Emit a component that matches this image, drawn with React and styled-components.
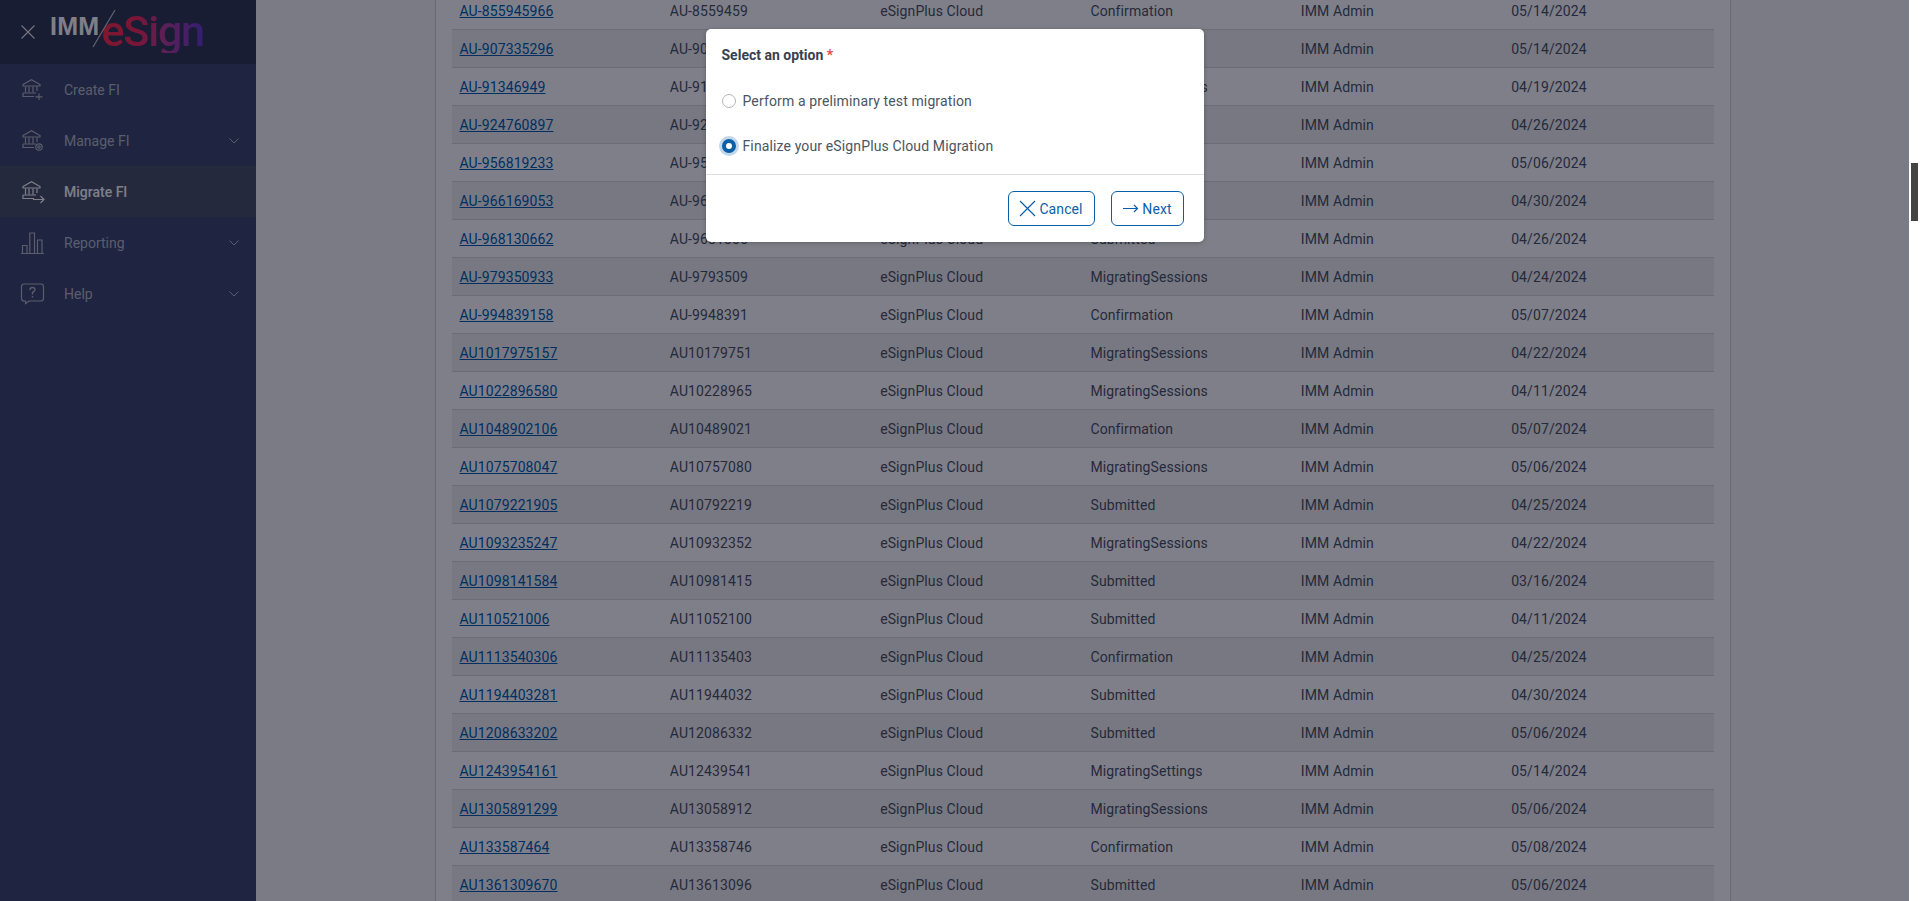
import React from "react";
import styled, { createGlobalStyle } from "styled-components";

const Global = createGlobalStyle`
  html, body { margin: 0; padding: 0; height: 100%; overflow: hidden; background: #fff; }
  body { font-family: Roboto, "Liberation Sans", sans-serif; font-size: 14px; }
  * { box-sizing: border-box; }
`;

const Shell = styled.div`display: flex; height: 901px; width: 1920px; overflow: hidden;`;
const Frame = styled.div`position: relative; display: flex; width: 1909px; height: 901px; overflow: hidden;`;
const ScrollTrack = styled.div`width: 11px; padding: 163px 2px 0 2px; background: #fff;`;
const ScrollThumb = styled.div`width: 7px; height: 58px; background: #444;`;

const Sidebar = styled.aside`width: 256px; flex: none; background: #3e4a6c; color: #b4bac6;`;
const SideHead = styled.div`display: flex; align-items: center; height: 64px; padding-left: 21px; background: #303a52;`;
const Logo = styled.div`position: relative; display: flex; align-items: center; margin-left: 15px; height: 64px; width: 170px;`;
const LogoIMM = styled.span`
  font-family: "Liberation Sans", sans-serif; font-weight: 700; font-size: 25px; letter-spacing: 0.3px;
  color: #fff; margin-top: -11px; line-height: 1;
`;
const LogoSign = styled.span`
  font-family: Roboto, sans-serif; font-weight: 500; font-size: 43px; letter-spacing: -1.2px; line-height: 1;
  margin-left: 2px; margin-top: -2px;
  background: linear-gradient(90deg, #ff3048 0%, #f22c5c 35%, #b8409c 62%, #6a3cd0 100%);
  -webkit-background-clip: text; background-clip: text; color: transparent;
`;
const LogoSlash = styled.svg`position: absolute; left: 42px; top: 9px;`;
const NavItem = styled.div`
  display: flex; align-items: center; height: 51px; padding-left: 20px; padding-right: 17px;
  background: ${p => (p.$active ? "#485266" : "transparent")};
  color: ${p => (p.$active ? "#fff" : "inherit")};
  font-weight: ${p => (p.$active ? 500 : 400)};
`;
const NavLabel = styled.span`flex: 1; margin-left: 18px;`;
const NavIcon = styled.svg`flex: none; width: 26px; height: 26px; fill: none; stroke: currentColor; stroke-width: 1.2;`;

const Main = styled.main`flex: 1; background: #f6f6f6; padding-left: 179px; padding-right: 178px; min-width: 0;`;
const Card = styled.section`
  height: 901px; overflow: hidden; background: #fff; padding: 0 16px;
  border-left: 1px solid #d4d4d8; border-right: 1px solid #d4d4d8;
`;
const Table = styled.table`
  width: 100%; margin-top: -9px; border-collapse: collapse; table-layout: fixed; color: #4b5563; font-size: 14px; letter-spacing: 0.1px;
`;
const Row = styled.tr`background: ${p => (p.$striped ? "#f0f0f0" : "transparent")}; height: 38px; border-bottom: 1px solid #d8d8dc;`;
const Cell = styled.td`padding: 2px 7px 0 7.5px; white-space: nowrap; height: 38px; line-height: 20px;`;
const RowLink = styled.a`color: #0060b0; text-decoration: underline;`;

const Overlay = styled.div`
  position: absolute; inset: 0; background: rgba(0, 0, 20, 0.5);
  display: flex; justify-content: center; align-items: flex-start; padding-top: 29px;
`;
const Modal = styled.div`
  width: 498px; height: 213px; background: #fff; border-radius: 5px; display: flex; flex-direction: column;
  box-shadow: 0 1px 4px rgba(0,0,0,.25);
`;
const ModalBody = styled.div`height: 146px; padding: 17px 16px 0; border-bottom: 1px solid #dedede;`;
const Legend = styled.div`font-weight: 700; font-size: 14px; color: #374151; line-height: 18px; margin-bottom: 14px;`;
const Required = styled.span`color: #ef4444;`;
const OptionRow = styled.label`display: flex; align-items: center; height: 45px; color: #4b5563; font-size: 14px; letter-spacing: 0.13px;`;
const Radio = styled.input`
  appearance: none; margin: 0 7px 0 0; flex: none; width: 14px; height: 14px; border-radius: 50%;
  border: 1px solid #b5b5b5; background: #fff;
  &:checked { border: 4px solid #0b5fa8; box-shadow: 0 0 0 3px rgba(11, 95, 168, 0.25); }
`;
const ModalFoot = styled.div`display: flex; justify-content: flex-end; gap: 16px; padding: 16px 20px 0 0;`;
const Button = styled.button`
  display: inline-flex; align-items: center; justify-content: center; gap: 3px; height: 35px;
  width: ${p => p.$w}px; padding: 0; border: 1px solid #0b5fa8; border-radius: 6px; background: #fff;
  color: #0b5fa8; font: 400 14px Roboto, sans-serif; letter-spacing: 0.1px;
`;
const ButtonIcon = styled.svg`width: 17px; height: 17px; fill: none; stroke: currentColor; stroke-width: 1.2; flex: none;`;

const Bank = () => (
  <>
    <path d="M3 7.5 L11.5 2.8 L20 7.5 V9 H3 Z" />
    <path d="M5.5 9.5 V15.5 M9 9.5 V15.5 M13 9.5 V15.5 M17 9.5 V14" />
    <path d="M3 16 H16 M3 16 V19.5 H14" />
  </>
);
const Chevron = styled.svg`flex: none; width: 10px; height: 6px; fill: none; stroke: currentColor; stroke-width: 1;`;
const Down = () => <Chevron viewBox="0 0 10 6"><path d="M0.5 0.5 L5 5 L9.5 0.5" /></Chevron>;

const rows = [
  ["AU-855945966","AU-8559459","Confirmation","05/14/2024"],
  ["AU-907335296","AU-9073352","Submitted","05/14/2024"],
  ["AU-91346949","AU-9134694","MigratingSessions","04/19/2024"],
  ["AU-924760897","AU-9247608","Submitted","04/26/2024"],
  ["AU-956819233","AU-9568192","Confirmation","05/06/2024"],
  ["AU-966169053","AU-9661690","Submitted","04/30/2024"],
  ["AU-968130662","AU-9681306","Submitted","04/26/2024"],
  ["AU-979350933","AU-9793509","MigratingSessions","04/24/2024"],
  ["AU-994839158","AU-9948391","Confirmation","05/07/2024"],
  ["AU1017975157","AU10179751","MigratingSessions","04/22/2024"],
  ["AU1022896580","AU10228965","MigratingSessions","04/11/2024"],
  ["AU1048902106","AU10489021","Confirmation","05/07/2024"],
  ["AU1075708047","AU10757080","MigratingSessions","05/06/2024"],
  ["AU1079221905","AU10792219","Submitted","04/25/2024"],
  ["AU1093235247","AU10932352","MigratingSessions","04/22/2024"],
  ["AU1098141584","AU10981415","Submitted","03/16/2024"],
  ["AU110521006","AU11052100","Submitted","04/11/2024"],
  ["AU1113540306","AU11135403","Confirmation","04/25/2024"],
  ["AU1194403281","AU11944032","Submitted","04/30/2024"],
  ["AU1208633202","AU12086332","Submitted","05/06/2024"],
  ["AU1243954161","AU12439541","MigratingSettings","05/14/2024"],
  ["AU1305891299","AU13058912","MigratingSessions","05/06/2024"],
  ["AU133587464","AU13358746","Confirmation","05/08/2024"],
  ["AU1361309670","AU13613096","Submitted","05/06/2024"],
];

export default function App() {
  return (
    <Shell>
      <Global />
      <Frame>
        <Sidebar>
          <SideHead>
            <svg width="14" height="14" viewBox="0 0 14 14" fill="none" stroke="#e8e8e8" strokeWidth="1.2">
              <path d="M0.5 0.5 L13.5 13.5 M13.5 0.5 L0.5 13.5" />
            </svg>
            <Logo>
              <LogoIMM>IMM</LogoIMM>
              <LogoSign>eSign</LogoSign>
              <LogoSlash width="24" height="40" viewBox="0 0 24 40" fill="none" stroke="#c8c8c8" strokeWidth="1.2">
                <path d="M23 1 L1 38" />
              </LogoSlash>
            </Logo>
          </SideHead>
          <NavItem>
            <NavIcon viewBox="0 0 26 26"><Bank /><path d="M19 16.5 V23 M15.5 19.8 H22.5" /></NavIcon>
            <NavLabel>Create FI</NavLabel>
          </NavItem>
          <NavItem>
            <NavIcon viewBox="0 0 26 26"><Bank /><circle cx="19" cy="19" r="3.2" /><circle cx="19" cy="19" r="1.2" /></NavIcon>
            <NavLabel>Manage FI</NavLabel>
            <Down />
          </NavItem>
          <NavItem $active>
            <NavIcon viewBox="0 0 26 26"><Bank /><path d="M13 20.5 H24 M20.5 17 L24 20.5 L20.5 24" /></NavIcon>
            <NavLabel>Migrate FI</NavLabel>
          </NavItem>
          <NavItem>
            <NavIcon viewBox="0 0 26 26"><path d="M1 23.5 H24 M2.5 23 V15.5 H7 V23 M9.8 23 V3 H14.5 V23 M17.5 23 V10 H22 V23" /></NavIcon>
            <NavLabel>Reporting</NavLabel>
            <Down />
          </NavItem>
          <NavItem>
            <NavIcon viewBox="0 0 26 26">
              <path d="M4 3 H21 Q23.5 3 23.5 5.5 V17 Q23.5 20 21 20 H9 L5.5 22.5 V20 H4 Q1.5 20 1.5 17 V5.5 Q1.5 3 4 3 Z" />
              <path d="M10 9 Q10 6.5 12.5 6.5 Q15 6.5 15 8.8 Q15 10.3 12.5 11.5 V13.5 M12.5 15 V16.5" strokeWidth="1.4" />
            </NavIcon>
            <NavLabel>Help</NavLabel>
            <Down />
          </NavItem>
        </Sidebar>
        <Main>
          <Card>
            <Table>
              <tbody>
                {rows.map((r, i) => (
                  <Row key={r[0]} $striped={i % 2 === 1}>
                    <Cell><RowLink href="#">{r[0]}</RowLink></Cell>
                    <Cell>{r[1]}</Cell>
                    <Cell>eSignPlus Cloud</Cell>
                    <Cell>{r[2]}</Cell>
                    <Cell>IMM Admin</Cell>
                    <Cell>{r[3]}</Cell>
                  </Row>
                ))}
              </tbody>
            </Table>
          </Card>
        </Main>
        <Overlay>
          <Modal>
            <ModalBody>
              <Legend>Select an option <Required>*</Required></Legend>
              <OptionRow><Radio type="radio" name="opt" />Perform a preliminary test migration</OptionRow>
              <OptionRow><Radio type="radio" name="opt" defaultChecked />Finalize your eSignPlus Cloud Migration</OptionRow>
            </ModalBody>
            <ModalFoot>
              <Button $w={87}>
                <ButtonIcon viewBox="0 0 17 17"><path d="M1 1 L16 16 M16 1 L1 16" /></ButtonIcon>
                Cancel
              </Button>
              <Button $w={73}>
                <ButtonIcon viewBox="0 0 17 17"><path d="M1 8.5 H15.5 M12 5 L15.5 8.5 L12 12" /></ButtonIcon>
                Next
              </Button>
            </ModalFoot>
          </Modal>
        </Overlay>
      </Frame>
      <ScrollTrack><ScrollThumb /></ScrollTrack>
    </Shell>
  );
}
